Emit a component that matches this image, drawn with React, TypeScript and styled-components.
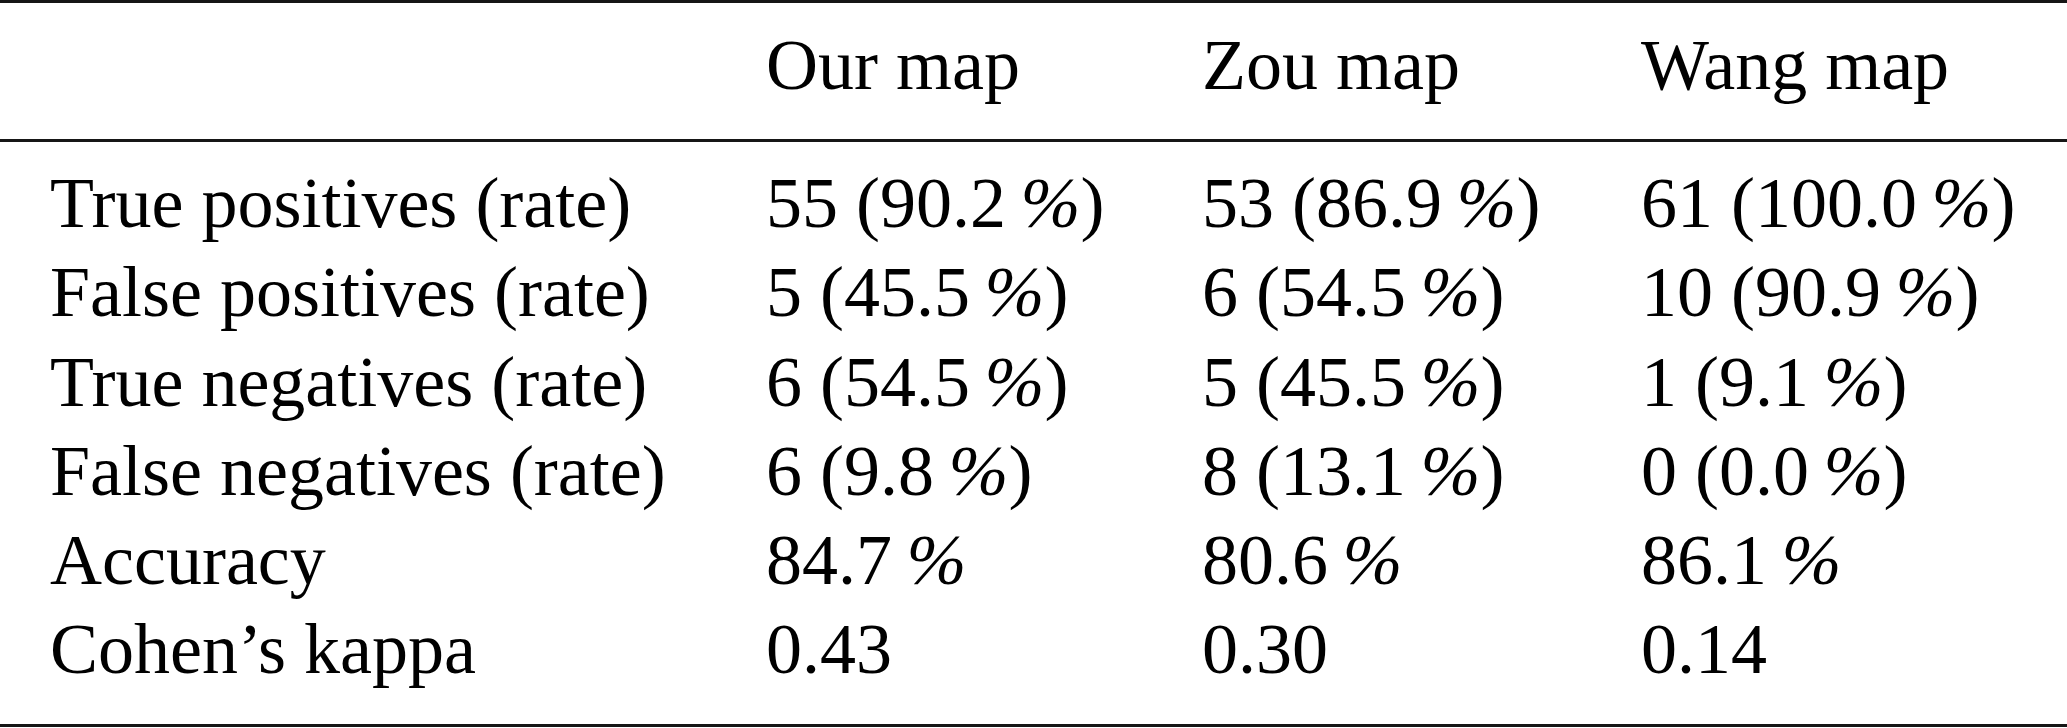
import React from "react";
import styled, { createGlobalStyle } from "styled-components";

// table data
type Row = {
  label: string;
  values: string[];
};

const columns = ["Our map", "Zou map", "Wang map"];

const rows: Row[] = [
  { label: "True positives (rate)", values: ["55 (90.2 %)", "53 (86.9 %)", "61 (100.0 %)"] },
  { label: "False positives (rate)", values: ["5 (45.5 %)", "6 (54.5 %)", "10 (90.9 %)"] },
  { label: "True negatives (rate)", values: ["6 (54.5 %)", "5 (45.5 %)", "1 (9.1 %)"] },
  { label: "False negatives (rate)", values: ["6 (9.8 %)", "8 (13.1 %)", "0 (0.0 %)"] },
  { label: "Accuracy", values: ["84.7 %", "80.6 %", "86.1 %"] },
  { label: "Cohen\u2019s kappa", values: ["0.43", "0.30", "0.14"] },
];

// "90.2 %" -> 90.2, thin space, slanted percent sign
function Value({ text }: { text: string }) {
  const parts = text.split(" %");
  if (parts.length === 1) return <>{text}</>;
  return (
    <>
      {parts[0]}
      {"\u2009"}
      <Pct>%</Pct>
      {parts[1]}
    </>
  );
}

export default function App() {
  return (
    <>
      <GlobalStyle />
      <Table>
        <Rule />
        <Head>
          <GridRow>
            <Cell />
            {columns.map((c) => (
              <Cell key={c}>{c}</Cell>
            ))}
          </GridRow>
        </Head>
        <Rule />
        <Body>
          {rows.map((r) => (
            <GridRow key={r.label}>
              <Cell>{r.label}</Cell>
              {r.values.map((v, i) => (
                <Cell key={i}>
                  <Value text={v} />
                </Cell>
              ))}
            </GridRow>
          ))}
        </Body>
        <Rule />
      </Table>
    </>
  );
}

// Styled Components
const GlobalStyle = createGlobalStyle`
  html, body {
    margin: 0;
    padding: 0;
    background: #ffffff;
  }
  body {
    font-family: "Liberation Serif", "Times New Roman", serif;
    color: #000000;
  }
`;

const Table = styled.div`
  width: 2067px;
  display: flex;
  flex-direction: column;
`;

const Rule = styled.div`
  height: 3px;
  background-color: #161616;
`;

const Head = styled.div`
  padding: 18px 0 29px 0;
`;

const Body = styled.div`
  padding: 17px 0 30px 0;
`;

const GridRow = styled.div`
  display: grid;
  grid-template-columns: 716px 436px 439px 1fr;
  padding-left: 50px;
  height: 89.2px;
`;

const Cell = styled.div`
  font-size: 72px;
  line-height: 89.2px;
  white-space: nowrap;
`;

const Pct = styled.span`
  font-style: italic;
`;
